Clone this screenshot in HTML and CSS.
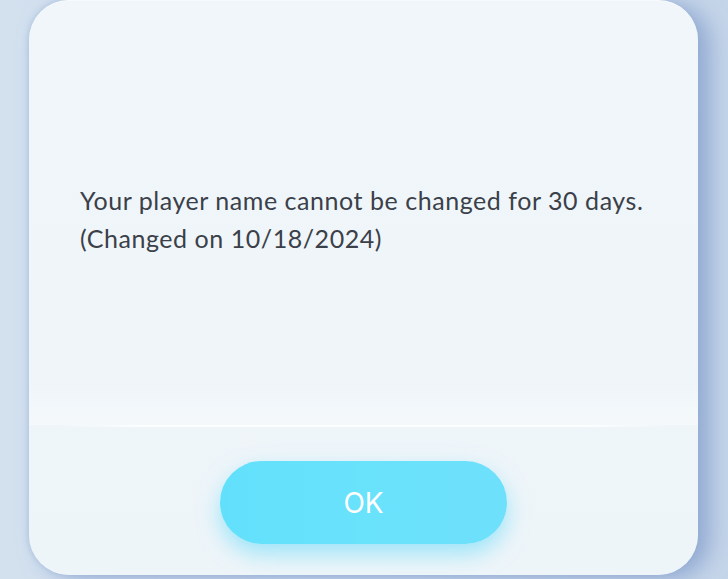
FILE: index.html
```html
<!DOCTYPE html>
<html>
<head>
    <title>Notice</title>
    <link rel="stylesheet" href="styles.css">
</head>
<body>
    <div class="screen">
        <!-- Popup card -->
        <div class="popup">
            <div class="popup-body">
                <p class="message">Your player name cannot be changed for 30 days.<br>(Changed on 10/18/2024)</p>
            </div>
            <div class="divider"></div>
            <div class="popup-footer">
                <button class="ok-btn">OK</button>
            </div>
        </div>
    </div>
</body>
</html>
```

FILE: styles.css
```css
/* General Styles */
body {
    margin: 0;
    padding: 0;
    font-family: "Lato", "Open Sans", sans-serif;
    background: linear-gradient(90deg, #d3e1ef 0%, #cddcec 60%, #c5d5e9 100%);
    overflow: hidden;
}

.screen {
    width: 728px;
    height: 579px;
    padding-left: 29px;
    box-sizing: border-box;
}

/* Popup card */
.popup {
    width: 669px;
    height: 575px;
    background: linear-gradient(180deg, #f0f6fa 0%, #eef5f9 100%);
    border-radius: 40px;
    box-shadow: 12px 4px 22px rgba(110, 140, 195, 0.6), -2px 0 4px rgba(150, 175, 215, 0.35);
    border-top: 1px solid #f8fbfd;
    box-sizing: border-box;
    display: flex;
    flex-direction: column;
}

.popup-body {
    height: 424px;
    display: flex;
    align-items: center;
    padding: 0 30px 0 51px;
    box-sizing: border-box;
    background: linear-gradient(180deg, rgba(255, 255, 255, 0) 90%, rgba(255, 255, 255, 0.35) 100%);
}

.message {
    margin: 12px 0 0 0;
    font-size: 25px;
    line-height: 38px;
    color: #3b4049;
    letter-spacing: 0.55px;
    white-space: nowrap;
}

/* Soft white line between text and button */
.divider {
    height: 2px;
    margin: 0 28px;
    background: linear-gradient(90deg, rgba(255, 255, 255, 0) 0%, rgba(255, 255, 255, 0.9) 15%, rgba(255, 255, 255, 0.9) 85%, rgba(255, 255, 255, 0) 100%);
}

.popup-footer {
    display: flex;
    justify-content: center;
    padding-top: 34px;
}

.ok-btn {
    width: 287px;
    height: 83px;
    border: none;
    border-radius: 42px;
    background: linear-gradient(90deg, #62e0fb 0%, #69e2fc 50%, #6ee0fb 100%);
    color: #ffffff;
    font-family: "Inter", "Noto Sans", sans-serif;
    font-size: 28px;
    font-weight: 400;
    padding: 0;
    box-shadow: 0 10px 22px rgba(90, 215, 250, 0.55);
    cursor: pointer;
}
```
